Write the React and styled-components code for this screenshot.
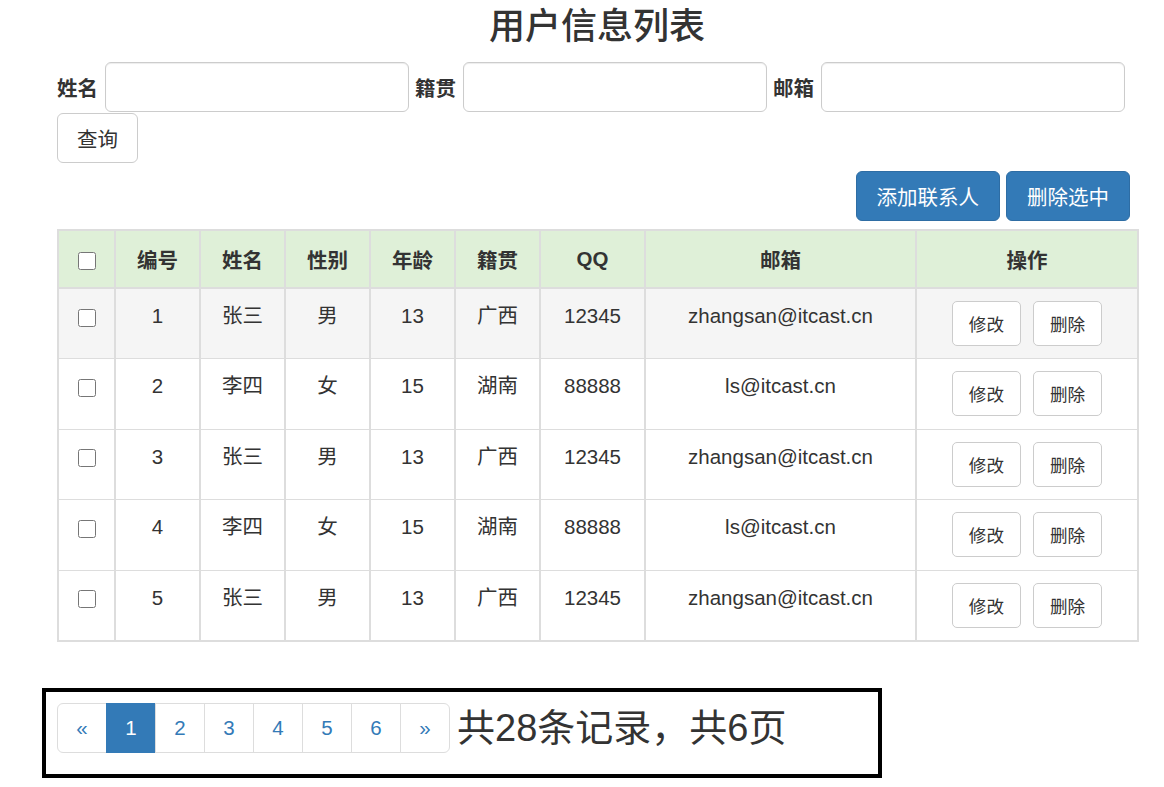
import React from 'react';
import styled, { createGlobalStyle } from 'styled-components';

/* ---------------------------------- data ---------------------------------- */
const users = [
	{ id: 1, name: '张三', gender: '男', age: 13, address: '广西', qq: '12345', email: 'zhangsan@itcast.cn' },
	{ id: 2, name: '李四', gender: '女', age: 15, address: '湖南', qq: '88888', email: 'ls@itcast.cn' },
	{ id: 3, name: '张三', gender: '男', age: 13, address: '广西', qq: '12345', email: 'zhangsan@itcast.cn' },
	{ id: 4, name: '李四', gender: '女', age: 15, address: '湖南', qq: '88888', email: 'ls@itcast.cn' },
	{ id: 5, name: '张三', gender: '男', age: 13, address: '广西', qq: '12345', email: 'zhangsan@itcast.cn' },
];

const columns = [57, 85, 85, 85, 85, 85, 105, 271, 222];

/* --------------------------------- styles --------------------------------- */
const GlobalStyle = createGlobalStyle`
	body {
		margin: 0;
		background: #fff;
		color: #333;
		font-family: "Liberation Sans", "Noto Sans CJK SC", sans-serif;
		font-size: 20.5px;
	}
`;

const Page = styled.div`
	width: 1080px;
	padding: 0 27px 40px 57px;
`;

const Title = styled.h3`
	margin: 7px 0 15px;
	font-size: 36px;
	line-height: 40px;
	font-weight: 500;
	text-align: center;
`;

const SearchForm = styled.form`
	display: flex;
	flex-wrap: wrap;
	align-items: center;
	column-gap: 6px;
	row-gap: 1px;
`;

const Label = styled.label`
	font-weight: bold;
	margin-right: 1px;
`;

const Input = styled.input`
	box-sizing: border-box;
	width: 304px;
	height: 50px;
	border: 1px solid #ccc;
	border-radius: 6px;
	box-shadow: inset 0 1px 1px rgba(0, 0, 0, 0.075);
`;

const Button = styled.button`
	box-sizing: border-box;
	height: ${p => (p.$small ? 45 : 50)}px;
	padding: 0 ${p => (p.$small ? 16 : 20)}px;
	border: 1px solid ${p => (p.$primary ? '#2e6da4' : '#ccc')};
	border-radius: ${p => (p.$small ? 5 : 6)}px;
	background: ${p => (p.$primary ? '#337ab7' : '#fff')};
	color: ${p => (p.$primary ? '#fff' : '#333')};
	font-family: inherit;
	font-size: ${p => (p.$small ? 17.6 : 20.5)}px;
	cursor: pointer;
`;

const QueryButton = styled(Button)`
	width: 81px;
	padding: 0;
`;

const Toolbar = styled.div`
	display: flex;
	justify-content: flex-end;
	gap: 6px;
	margin: 8px 7px 8px 0;
`;

const Table = styled.table`
	width: 1079px;
	table-layout: fixed;
	border-collapse: collapse;
	border: 2px solid #ddd;
`;

const HeadCell = styled.th`
	height: 56px;
	padding: 0 8px;
	background: #dff0d8;
	border: 2px solid #ddd;
	font-weight: bold;
	text-align: center;
	vertical-align: middle;
`;

const Row = styled.tr`
	height: 70.5px;
	background: ${p => (p.$shaded ? '#f5f5f5' : '#fff')};
`;

const Cell = styled.td`
	padding: 12px 8px;
	border-left: 2px solid #ddd;
	border-right: 2px solid #ddd;
	border-top: 1px solid #ddd;
	line-height: 29px;
	text-align: center;
	vertical-align: top;
`;

const Check = styled.input.attrs({ type: 'checkbox' })`
	width: 18px;
	height: 18px;
	margin: 0;
	vertical-align: middle;
`;

const Actions = styled.div`
	display: flex;
	justify-content: center;
	gap: 12px;
`;

const PagerBox = styled.div`
	display: flex;
	align-items: center;
	box-sizing: border-box;
	width: 840px;
	margin: 46px 0 0 -15px;
	padding: 11px 11px 21px;
	border: 4px solid #000;
`;

const Pager = styled.ul`
	display: flex;
	margin: 0;
	padding: 0;
	list-style: none;
`;

const PageItem = styled.li`
	box-sizing: border-box;
	width: 50px;
	height: 50px;
	margin-left: -1px;
	display: flex;
	align-items: center;
	justify-content: center;
	border: 1px solid ${p => (p.$active ? '#337ab7' : '#ddd')};
	background: ${p => (p.$active ? '#337ab7' : '#fff')};
	color: ${p => (p.$active ? '#fff' : '#337ab7')};
	&:first-child {
		margin-left: 0;
		border-radius: 6px 0 0 6px;
	}
	&:last-child {
		border-radius: 0 6px 6px 0;
	}
`;

const Summary = styled.span`
	margin-left: 7px;
	font-size: 38px;
	line-height: 50px;
`;

/* -------------------------------- component ------------------------------- */
const App = () => {
	return (
		<Page>
			<GlobalStyle />
			<Title>用户信息列表</Title>
			<SearchForm onSubmit={e => e.preventDefault()}>
				<Label>姓名</Label>
				<Input />
				<Label>籍贯</Label>
				<Input />
				<Label>邮箱</Label>
				<Input />
				<QueryButton type="submit">查询</QueryButton>
			</SearchForm>
			<Toolbar>
				<Button $primary>添加联系人</Button>
				<Button $primary>删除选中</Button>
			</Toolbar>
			<Table>
				<colgroup>
					{columns.map((w, i) => <col key={i} style={{ width: w }} />)}
				</colgroup>
				<thead>
					<tr>
						<HeadCell><Check /></HeadCell>
						<HeadCell>编号</HeadCell>
						<HeadCell>姓名</HeadCell>
						<HeadCell>性别</HeadCell>
						<HeadCell>年龄</HeadCell>
						<HeadCell>籍贯</HeadCell>
						<HeadCell>QQ</HeadCell>
						<HeadCell>邮箱</HeadCell>
						<HeadCell>操作</HeadCell>
					</tr>
				</thead>
				<tbody>
					{users.map((u, i) => (
						<Row key={u.id} $shaded={i === 0}>
							<Cell><Check /></Cell>
							<Cell>{u.id}</Cell>
							<Cell>{u.name}</Cell>
							<Cell>{u.gender}</Cell>
							<Cell>{u.age}</Cell>
							<Cell>{u.address}</Cell>
							<Cell>{u.qq}</Cell>
							<Cell>{u.email}</Cell>
							<Cell>
								<Actions>
									<Button $small>修改</Button>
									<Button $small>删除</Button>
								</Actions>
							</Cell>
						</Row>
					))}
				</tbody>
			</Table>
			<PagerBox>
				<Pager>
					<PageItem>«</PageItem>
					{[1, 2, 3, 4, 5, 6].map(n => (
						<PageItem key={n} $active={n === 1}>{n}</PageItem>
					))}
					<PageItem>»</PageItem>
				</Pager>
				<Summary>共28条记录，共6页</Summary>
			</PagerBox>
		</Page>
	);
};

export default App;
